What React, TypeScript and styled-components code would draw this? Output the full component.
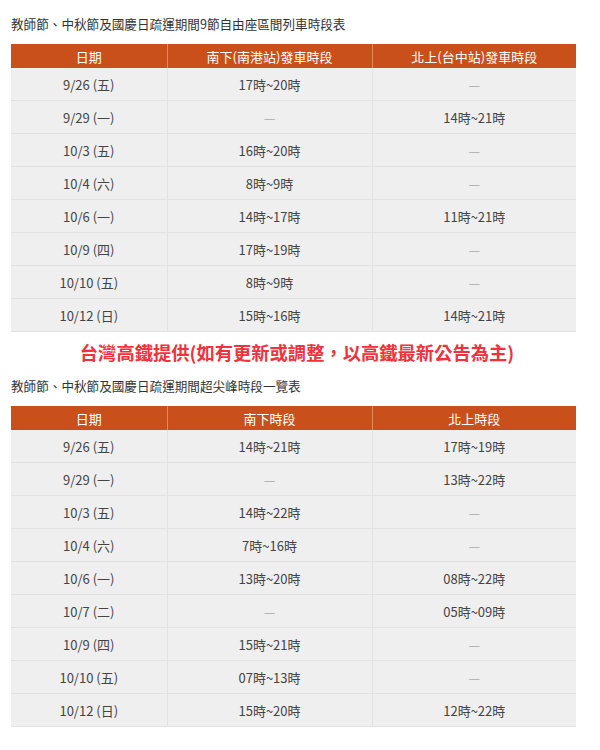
import styled, { createGlobalStyle } from 'styled-components';

type Row = [string, string, string];

const holidayTrains: Row[] = [
	['9/26 (五)', '17時~20時', '—'],
	['9/29 (一)', '—', '14時~21時'],
	['10/3 (五)', '16時~20時', '—'],
	['10/4 (六)', '8時~9時', '—'],
	['10/6 (一)', '14時~17時', '11時~21時'],
	['10/9 (四)', '17時~19時', '—'],
	['10/10 (五)', '8時~9時', '—'],
	['10/12 (日)', '15時~16時', '14時~21時'],
];

const peakTimes: Row[] = [
	['9/26 (五)', '14時~21時', '17時~19時'],
	['9/29 (一)', '—', '13時~22時'],
	['10/3 (五)', '14時~22時', '—'],
	['10/4 (六)', '7時~16時', '—'],
	['10/6 (一)', '13時~20時', '08時~22時'],
	['10/7 (二)', '—', '05時~09時'],
	['10/9 (四)', '15時~21時', '—'],
	['10/10 (五)', '07時~13時', '—'],
	['10/12 (日)', '15時~20時', '12時~22時'],
];

const ScheduleTable = ({ heads, rows }: { heads: Row; rows: Row[] }) => (
	<Table>
		<colgroup>
			<col style={{ width: 156 }} />
			<col style={{ width: 205 }} />
			<col />
		</colgroup>
		<thead>
			<tr>
				{heads.map((h) => (
					<Th key={h}>{h}</Th>
				))}
			</tr>
		</thead>
		<tbody>
			{rows.map((r) => (
				<tr key={r[0]}>
					{r.map((c, i) => (
						<Td key={i} $empty={c === '—'}>
							{c}
						</Td>
					))}
				</tr>
			))}
		</tbody>
	</Table>
);

export default function App() {
	return (
		<>
			<GlobalStyle />
			<Page>
				<Title>教師節、中秋節及國慶日疏運期間9節自由座區間列車時段表</Title>
				<ScheduleTable
					heads={['日期', '南下(南港站)發車時段', '北上(台中站)發車時段']}
					rows={holidayTrains}
				/>
				<Notice>台灣高鐵提供(如有更新或調整，以高鐵最新公告為主)</Notice>
				<Title>教師節、中秋節及國慶日疏運期間超尖峰時段一覽表</Title>
				<ScheduleTable heads={['日期', '南下時段', '北上時段']} rows={peakTimes} />
			</Page>
		</>
	);
}

const GlobalStyle = createGlobalStyle`
  body {
    margin: 0;
    background: #fff;
    font-family: 'Noto Sans CJK TC', 'Noto Sans', sans-serif;
  }
`;

const Page = styled.div`
  width: 565px;
  padding: 14px 0 0 11px;
`;

const Title = styled.h3`
  margin: 0 0 10px;
  font-size: 12.6px;
  line-height: 20px;
  font-weight: 400;
  color: #333;
`;

const Table = styled.table`
  width: 100%;
  border-collapse: collapse;
  table-layout: fixed;
`;

const Th = styled.th`
  height: 24px;
  padding: 0;
  background: #c9501a;
  color: #fff;
  font-size: 13px;
  font-weight: 400;
  border-left: 1px solid #e08a5c;
  &:first-child {
    border-left: none;
  }
`;

const Td = styled.td<{ $empty?: boolean }>`
  height: 32px;
  padding: 0;
  background: #efefef;
  border-bottom: 1px solid #e2e2e2;
  border-left: 1px solid #e2e2e2;
  text-align: center;
  font-size: 13px;
  color: ${(p) => (p.$empty ? '#aaa' : '#444')};
  &:first-child {
    border-left: none;
  }
`;

const Notice = styled.p`
  margin: 0;
  padding: 7px 0 0 7px;
  height: 33px;
  box-sizing: border-box;
  text-align: center;
  font-size: 18.3px;
  line-height: 26px;
  font-weight: 700;
  color: #f0323c;
  & + h3 {
    margin-top: 11px;
  }
`;
